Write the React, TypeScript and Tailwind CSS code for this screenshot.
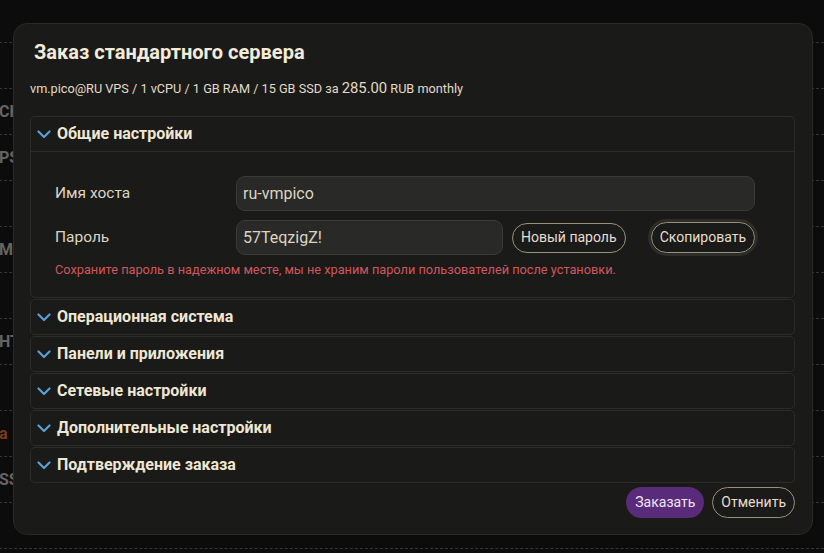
import React from 'react';

const bgRows = ['', 'СН', 'PSI', '', 'Me', '', 'НТ', '', 'а', 'SS', '', ''];

const sections = [
  'Операционная система',
  'Панели и приложения',
  'Сетевые настройки',
  'Дополнительные настройки',
  'Подтверждение заказа'
];

const Chevron = () => (
  <svg width="14" height="9" viewBox="0 0 14 9" className="shrink-0">
    <path d="M1.5 1.5 L7 7 L12.5 1.5" fill="none" stroke="#5a9fd8" strokeWidth="2.2" strokeLinecap="round" strokeLinejoin="round" />
  </svg>
);

const SectionHeader = ({ title }: { title: string }) => (
  <div className="flex items-center h-[34px] pl-[6px] gap-[6px]">
    <Chevron />
    <span className="text-[16px] font-bold text-[#efe7d4]">{title}</span>
  </div>
);

export default function App() {
  return (
    <div className="relative w-[824px] h-[553px] overflow-hidden bg-[#0c0c0c] font-['Roboto',sans-serif]">
      <div className="flex flex-col pt-[42px]">
        {bgRows.map((t, i) => (
          <div key={i} className="h-[46px] border-t border-dashed border-[#353535] flex items-center -ml-[1px]">
            <span className={`text-[16px] font-bold ${t === 'а' ? 'text-[#7a3a1c]' : 'text-[#656563]'}`}>{t}</span>
          </div>
        ))}
      </div>

      <div className="absolute left-[13px] top-[23px] w-[800px] h-[512px] rounded-[14px] bg-[#1a1a19] border border-[#292927] flex flex-col pl-[16px] pr-[17px]">
        <h1 className="pt-[14px] pl-[4px] text-[20px] leading-[28px] font-bold text-[#f4ecda]">Заказ стандартного сервера</h1>
        <p className="mt-[12px] text-[12.7px] leading-[20px] text-[#e2dac8]">
          vm.pico@RU VPS / 1 vCPU / 1 GB RAM / 15 GB SSD за <span className="text-[14.8px]">285.00</span> RUB monthly
        </p>

        <div className="mt-[17px] flex flex-col gap-[1px]">
          <div className="rounded-[5px] border border-[#2b2b29]">
            <SectionHeader title="Общие настройки" />
            <div className="border-t border-[#2b2b29] pt-[24px] pb-[19px] pl-[24px] pr-[39px]">
              <div className="flex items-center h-[35px]">
                <span className="w-[181px] text-[15.5px] text-[#ddd5c3]">Имя хоста</span>
                <div className="flex-1 h-[35px] rounded-[9px] bg-[#292928] border border-[#3a3a38] flex items-center px-[6px] text-[16px] text-[#dcd4c1]">ru-vmpico</div>
              </div>
              <div className="flex items-center h-[35px] mt-[9px]">
                <span className="w-[181px] text-[15.5px] text-[#ddd5c3]">Пароль</span>
                <div className="w-[267px] h-[35px] rounded-[9px] bg-[#292928] border border-[#3a3a38] flex items-center px-[6px] text-[16px] text-[#dcd4c1]">57TeqzigZ!</div>
                <button className="ml-[9px] h-[30px] px-[8px] rounded-full border border-[#9a8f78] text-[14px] text-[#e6dece]">Новый пароль</button>
                <button className="ml-auto h-[31px] px-[8px] rounded-full border border-[#9a8f78] text-[14px] text-[#e6dece] ring-[3px] ring-[#2c2c2a]">Скопировать</button>
              </div>
              <p className="mt-[6px] text-[12.75px] leading-[17px] text-[#d0575d]">
                Сохраните пароль в надежном месте, мы не храним пароли пользователей после установки.
              </p>
            </div>
          </div>
          {sections.map((s) => (
            <div key={s} className="rounded-[5px] border border-[#2b2b29]">
              <SectionHeader title={s} />
            </div>
          ))}
        </div>

        <div className="mt-[4px] flex justify-end gap-[8px]">
          <button className="h-[31px] px-[9px] rounded-full bg-[#5a2b7b] text-[14px] text-[#efe6f2]">Заказать</button>
          <button className="h-[31px] px-[8px] rounded-full border border-[#9a8f78] text-[14px] text-[#e6dece]">Отменить</button>
        </div>
      </div>
    </div>
  );
}
